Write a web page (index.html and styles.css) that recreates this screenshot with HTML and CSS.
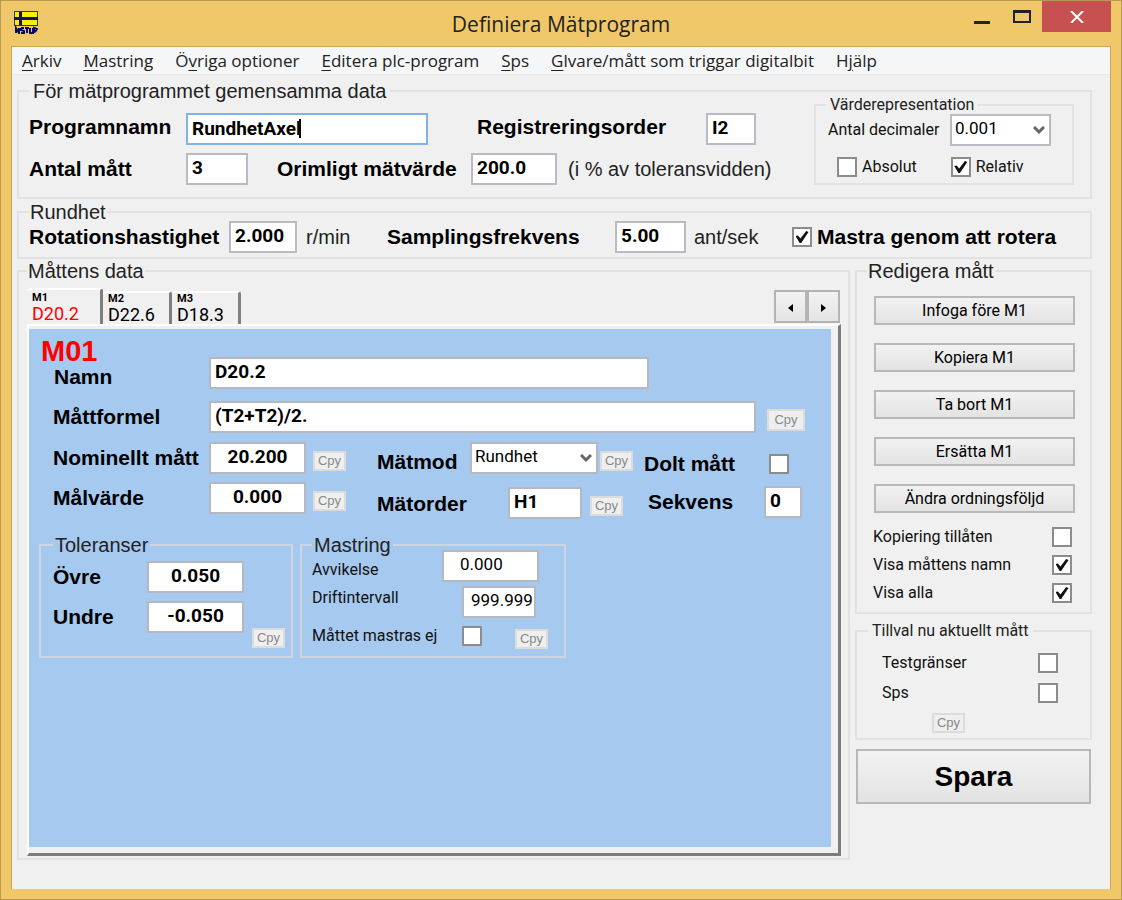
FILE: index.html
```html
<!DOCTYPE html>
<html lang="sv">
<head>
<meta charset="utf-8">
<title>Definiera Mätprogram</title>
<link rel="stylesheet" href="styles.css">
</head>
<body>
<div class="window">
  <header class="titlebar">
    <svg class="app-icon" viewBox="0 0 24 23" width="24" height="23" aria-hidden="true">
      <rect x="0" y="0" width="24" height="15" fill="#3a3a14"/>
      <rect x="1" y="1" width="22" height="13" fill="#f6f000"/>
      <rect x="0" y="6" width="24" height="3" fill="#10106e"/>
      <rect x="5" y="1" width="3" height="13" fill="#10106e"/>
      <path d="M2 22V17l3 5V17M7 17h3M7 17v2l3 1v2H7M11 17h4M13 17v5M16 17v5h3V17M20 22v-5l3 1-2 3" fill="none" stroke="#0a0a66" stroke-width="2"/>
    </svg>
    <h1 class="title">Definiera Mätprogram</h1>
    <div class="window-buttons">
      <button type="button" class="win-btn" aria-label="Minimera"><svg width="16" height="20" viewBox="0 0 16 20"><rect y="14" width="16" height="3" fill="#222"/></svg></button>
      <button type="button" class="win-btn" aria-label="Maximera"><svg width="18" height="20" viewBox="0 0 18 20"><path d="M1 4v11h16V4z" fill="none" stroke="#222" stroke-width="2"/><rect y="3" width="18" height="3" fill="#222"/></svg></button>
      <button type="button" class="win-btn win-close" aria-label="Stäng"><svg width="14" height="12" viewBox="0 0 14 12"><path d="M1 0l12 12M13 0L1 12" stroke="#fff" stroke-width="2"/></svg></button>
    </div>
  </header>

  <main class="client">
    <nav class="menu">
      <button type="button"><u>A</u>rkiv</button>
      <button type="button"><u>M</u>astring</button>
      <button type="button">Ö<u>v</u>riga optioner</button>
      <button type="button"><u>E</u>ditera plc-program</button>
      <button type="button"><u>S</u>ps</button>
      <button type="button"><u>G</u>lvare/mått som triggar digitalbit</button>
      <button type="button">H<u>j</u>älp</button>
    </nav>

    <form class="content">
      <fieldset class="group common">
        <legend class="wide-legend">För mätprogrammet gemensamma data</legend>
        <div class="common-fields">
          <div class="row top-row">
            <label class="label col-program" for="program">Programnamn</label>
            <span class="focus-field"><input class="box w-program focused" id="program" value="RundhetAxel"><i class="caret"></i></span>
            <label class="label col-register" for="register">Registreringsorder</label>
            <input class="box w-50" id="register" value="I2">
          </div>
          <div class="row">
            <label class="label col-program" for="count">Antal mått</label>
            <input class="box w-62" id="count" value="3">
            <label class="label col-unreal" for="unreal">Orimligt mätvärde</label>
            <input class="box w-86" id="unreal" value="200.0">
            <span class="unit">(i % av toleransvidden)</span>
          </div>
        </div>
        <fieldset class="group values">
          <legend class="small-legend">Värderepresentation</legend>
          <div class="row values-row">
            <label class="small" for="decimals">Antal decimaler</label>
            <span class="select-wrap w-100">
              <select class="box" id="decimals"><option>0.001</option></select>
              <svg class="chevron" width="12" height="9" viewBox="0 0 12 9"><path d="M1 1l5 5 5-5" fill="none" stroke="#666" stroke-width="3"/></svg>
            </span>
          </div>
          <div class="row checks">
            <label class="small check"><input type="checkbox">Absolut</label>
            <label class="small check"><input type="checkbox" checked>Relativ</label>
          </div>
        </fieldset>
      </fieldset>

      <fieldset class="group roundness">
        <legend>Rundhet</legend>
        <label class="label col-speed" for="speed">Rotationshastighet</label>
        <input class="box w-68" id="speed" value="2.000">
        <span class="unit col-rpm">r/min</span>
        <label class="label col-sampling" for="sampling">Samplingsfrekvens</label>
        <input class="box w-70" id="sampling" value="5.00">
        <span class="unit col-rate">ant/sek</span>
        <label class="label check"><input type="checkbox" checked>Mastra genom att rotera</label>
      </fieldset>

      <div class="columns">
        <fieldset class="group data">
          <legend>Måttens data</legend>
          <div class="tabbar">
            <div class="tabs" role="tablist">
              <button type="button" class="tab active" role="tab" aria-selected="true"><small>M1</small>D20.2</button>
              <button type="button" class="tab" role="tab"><small>M2</small>D22.6</button>
              <button type="button" class="tab" role="tab"><small>M3</small>D18.3</button>
            </div>
            <div class="pager">
              <button type="button" aria-label="Föregående"><svg width="5" height="8" viewBox="0 0 5 8"><path d="M5 0v8L0 4z"/></svg></button>
              <button type="button" aria-label="Nästa"><svg width="5" height="8" viewBox="0 0 5 8"><path d="M0 0v8l5-4z"/></svg></button>
            </div>
          </div>
          <div class="page">
            <div class="sheet">
              <div class="row name-row">
                <div class="heading col-name">
                  <h2>M01</h2>
                  <label class="label" for="name">Namn</label>
                </div>
                <input class="box w-name" id="name" value="D20.2">
              </div>
              <div class="row">
                <label class="label col-name" for="formula">Måttformel</label>
                <input class="box w-formula" id="formula" value="(T2+T2)/2.">
                <button type="button" class="cpy cpy-large" disabled>Cpy</button>
              </div>
              <div class="blocks">
                <div class="block-nominal">
                  <label class="label" for="nominal">Nominellt mått</label>
                  <input class="box centered" id="nominal" value="20.200">
                  <button type="button" class="cpy" disabled>Cpy</button>
                  <label class="label" for="target">Målvärde</label>
                  <input class="box centered" id="target" value="0.000">
                  <button type="button" class="cpy" disabled>Cpy</button>
                </div>
                <div class="block-mode">
                  <div class="row mode-row">
                    <label class="label" for="mode">Mätmod</label>
                    <span class="select-wrap w-128">
                      <select class="box" id="mode"><option>Rundhet</option></select>
                      <svg class="chevron" width="12" height="9" viewBox="0 0 12 9"><path d="M1 1l5 5 5-5" fill="none" stroke="#666" stroke-width="3"/></svg>
                    </span>
                    <button type="button" class="cpy" disabled>Cpy</button>
                  </div>
                  <div class="row order-row">
                    <label class="label" for="order">Mätorder</label>
                    <input class="box w-74" id="order" value="H1">
                    <button type="button" class="cpy" disabled>Cpy</button>
                  </div>
                </div>
                <div class="block-hidden">
                  <label class="label hidden-row">Dolt mått<input type="checkbox"></label>
                  <div class="row sequence-row">
                    <label class="label" for="sequence">Sekvens</label>
                    <input class="box w-38" id="sequence" value="0">
                  </div>
                </div>
              </div>
              <div class="subgroups">
                <fieldset class="group tolerances">
                  <legend>Toleranser</legend>
                  <div class="tolerance-grid">
                    <label class="label" for="upper">Övre</label>
                    <input class="box centered" id="upper" value="0.050">
                    <label class="label" for="lower">Undre</label>
                    <input class="box centered" id="lower" value="-0.050">
                  </div>
                  <button type="button" class="cpy" disabled>Cpy</button>
                </fieldset>
                <fieldset class="group mastering">
                  <legend>Mastring</legend>
                  <div class="row deviation-row">
                    <label class="small" for="deviation">Avvikelse</label>
                    <input class="box plain indented w-97" id="deviation" value="0.000">
                  </div>
                  <div class="row interval-row">
                    <label class="small" for="interval">Driftintervall</label>
                    <input class="box plain w-74" id="interval" value="999.999">
                  </div>
                  <div class="row nomaster-row">
                    <label class="small nomaster">Måttet mastras ej<input type="checkbox"></label>
                    <button type="button" class="cpy" disabled>Cpy</button>
                  </div>
                </fieldset>
              </div>
            </div>
          </div>
        </fieldset>

        <aside class="side">
          <fieldset class="group edit">
            <legend>Redigera mått</legend>
            <div class="edit-buttons">
              <button type="button" class="btn">Infoga före M1</button>
              <button type="button" class="btn">Kopiera M1</button>
              <button type="button" class="btn">Ta bort M1</button>
              <button type="button" class="btn">Ersätta M1</button>
              <button type="button" class="btn">Ändra ordningsföljd</button>
            </div>
            <div class="options">
              <label class="small">Kopiering tillåten<input type="checkbox"></label>
              <label class="small">Visa måttens namn<input type="checkbox" checked></label>
              <label class="small">Visa alla<input type="checkbox" checked></label>
            </div>
          </fieldset>
          <fieldset class="group extras">
            <legend class="small-legend">Tillval nu aktuellt mått</legend>
            <div class="extras-list">
              <label class="small">Testgränser<input type="checkbox"></label>
              <label class="small">Sps<input type="checkbox"></label>
              <button type="button" class="cpy" disabled>Cpy</button>
            </div>
          </fieldset>
          <button type="button" class="btn save">Spara</button>
        </aside>
      </div>
    </form>
  </main>
</div>
</body>
</html>
```
FILE: styles.css
```css
* { box-sizing: border-box; }

body {
  margin: 0;
  background: #f0c869;
  color: #000;
  font-family: "Liberation Sans", Arial, sans-serif;
}

button, input, select { font: inherit; color: inherit; margin: 0; }
button { padding: 0; }

.window {
  min-height: 100vh;
  display: flex;
  flex-direction: column;
  border: 1px solid #b8994e;
  padding: 0 10px 10px;
  background: #f0c869;
}

/* Title bar */
.titlebar {
  display: grid;
  grid-template-columns: 1fr auto 1fr;
  height: 45px;
}
.app-icon { margin: 10px 3px; }
.title {
  margin: 0;
  font: 400 21px/46px "Open Sans", "Noto Sans", sans-serif;
  color: #222;
}
.window-buttons { display: flex; justify-content: flex-end; }
.win-btn {
  width: 40px;
  height: 31px;
  border: 0;
  background: none;
  display: flex;
  align-items: center;
  justify-content: center;
}
.win-close { width: 69px; background: #c75050; }

.client {
  flex: 1;
  border: 1px solid #c9a652;
  border-bottom: 0;
  background: #f0f0f0;
}

/* Menu */
.menu {
  display: flex;
  gap: 22px;
  height: 28px;
  padding: 0 10px;
  background: #f5f6f7;
  border-bottom: 1px solid #e8e8e8;
}
.menu button {
  border: 0;
  background: none;
  white-space: nowrap;
  font: 400 17px/28px "Open Sans", "Noto Sans", sans-serif;
  color: #222;
}
.menu u { text-underline-offset: 3px; }

.content { padding: 15px 18px 28px 5px; }

/* Group boxes */
.group {
  margin: 0;
  min-width: 0;
  padding: 0;
  border: 2px solid #e2e2e2;
}
legend {
  padding: 0 1px;
  font-size: 20px;
  line-height: 2px;
  white-space: nowrap;
  color: #222;
}
.wide-legend { padding: 0 4px; }
.small-legend { font: 400 16px/2px Roboto, sans-serif; padding: 0 4px; }

.row { display: flex; align-items: center; }
.label { font-size: 21px; line-height: 24px; font-weight: 700; white-space: nowrap; }
.unit { font-size: 20px; line-height: 24px; white-space: nowrap; color: #222; }
.small { font: 400 16px/20px Roboto, sans-serif; white-space: nowrap; color: #111; }

.box {
  height: 32px;
  padding: 0 4px 4px;
  border: 2px solid #b9bac4;
  border-radius: 0;
  background: #fff;
  font: 700 19px/24px Roboto, sans-serif;
  outline: 0;
  min-width: 0;
}
.plain { font-size: 17px; font-weight: 400; padding: 0 0 4px 7px; }
.indented { padding-left: 16px; }
.centered { text-align: center; }
.focused { border-color: #7eb4ea; padding-bottom: 1px; }
.focus-field { position: relative; display: flex; }
.caret { position: absolute; left: 113px; top: 6px; width: 2px; height: 19px; background: #000; }

.w-program { width: 242px; }
.w-38 { width: 38px; }
.w-50 { width: 50px; }
.w-62 { width: 62px; }
.w-68 { width: 68px; }
.w-70 { width: 71px; }
.w-74 { width: 74px; }
.w-86 { width: 86px; }
.w-97 { width: 97px; }
.w-100 { width: 101px; }
.w-128 { width: 128px; }
.w-name { width: 440px; }
.w-formula { width: 547px; }

.select-wrap { position: relative; display: flex; }
select.box { appearance: none; width: 100%; font-weight: 400; font-size: 17px; padding-left: 3px; }
.chevron { position: absolute; right: 6px; top: 12px; pointer-events: none; }

input[type="checkbox"] {
  appearance: none;
  flex: none;
  width: 20px;
  height: 20px;
  border: 2px solid #8c8c8c;
  background: #fff;
  display: grid;
  place-items: center;
}
input[type="checkbox"]:checked::before {
  content: "";
  width: 13px;
  height: 12px;
  background: #111;
  clip-path: polygon(0 42%, 18% 38%, 38% 62%, 82% 0, 100% 8%, 44% 100%, 32% 100%);
}
.check { display: flex; align-items: center; gap: 5px; }

/* Common data */
.common { display: flex; justify-content: space-between; padding: 0 16px 12px 10px; }
.common-fields { display: grid; align-content: start; gap: 8px; padding-top: 21px; }
.top-row .label { padding-bottom: 4px; }
.col-program { width: 157px; }
.col-register { width: 278px; padding-left: 49px; }
.col-unreal { width: 223px; padding-left: 29px; }
.common-fields .unit { padding-left: 11px; }
.values { width: 260px; margin-top: 12px; padding-left: 10px; }
.values-row { justify-content: space-between; padding: 8px 21px 0 2px; }
.checks { gap: 34px; padding: 11px 0 0 11px; }

/* Roundness */
.roundness {
  display: flex;
  align-items: center;
  margin-top: 12px;
  padding: 8px 10px 4px;
}
.col-speed { width: 200px; }
.col-rpm { width: 90px; padding-left: 9px; }
.col-sampling { width: 228px; }
.col-rate { width: 106px; padding-left: 8px; }

/* Main columns */
.columns {
  display: grid;
  grid-template-columns: 1fr 237px;
  gap: 5px;
  margin-top: 11px;
  align-items: start;
}
.data { padding: 16px 7px 2px 8px; }
.tabbar { display: flex; justify-content: space-between; align-items: flex-end; }
.tabs { display: flex; align-items: flex-end; }
.tab {
  width: 69px;
  height: 33px;
  padding: 0 5px;
  border: 0;
  border-top: 2px solid #fff;
  border-right: 3px solid #808080;
  border-radius: 4px 3px 0 0;
  background: #f0f0f0;
  text-align: left;
  font: 400 18px/19px Roboto, sans-serif;
}
.tab.active { width: 76px; height: 36px; color: #f00; }
.tab small { display: block; font: 700 11px/12px Roboto, sans-serif; color: #000; }
.pager { display: flex; padding: 0 1px 1px 0; }
.pager button {
  width: 33px;
  height: 33px;
  border: 2px solid #b4b4b4;
  background: linear-gradient(#f2f2f2, #e4e4e4);
}
.page {
  border: 2px solid #fff;
  border-right: 3px solid #7c7c7c;
  border-bottom: 3px solid #7c7c7c;
  padding: 3px 7px 6px 0;
}
.sheet { min-height: 518px; padding: 8px 10px; background: #a6c9ef; }
.sheet .group { border-color: #cdd6e0; }
.heading { display: grid; padding-left: 2px; }
.heading h2 { margin: 0; font-size: 29px; line-height: 28px; color: #f00; }
.heading .label { padding-left: 13px; }
.sheet .box { border-color: #b4b8c0; }
.col-name { width: 170px; flex: none; }
label.col-name { padding-left: 14px; }
.name-row { align-items: flex-end; padding-bottom: 12px; }

.cpy {
  width: 33px;
  height: 20px;
  border: 2px solid #dcdcdc;
  background: #efefef;
  color: #888;
  font: 400 13px/14px "Liberation Sans", sans-serif;
}
.row .cpy, .block-nominal .cpy { margin-top: 6px; }
.cpy-large { width: 38px; height: 22px; margin-left: 11px; }

.blocks { display: flex; align-items: flex-start; padding-top: 9px; }
.block-nominal {
  display: grid;
  grid-template-columns: 156px 97px 40px;
  row-gap: 8px;
  align-items: center;
  padding-left: 14px;
}
.block-nominal .cpy { margin-left: 7px; }
.block-mode { width: 257px; margin-left: 31px; }
.mode-row { gap: 2px; }
.mode-row .label { width: 91px; padding-top: 8px; }
.order-row { gap: 8px; padding-top: 13px; }
.order-row .label { width: 123px; padding-top: 2px; }
.block-hidden { width: 158px; margin-left: 10px; padding-top: 10px; }
.hidden-row { display: flex; justify-content: space-between; align-items: center; padding-right: 13px; }
.sequence-row { justify-content: space-between; padding: 10px 0 0 4px; }

.subgroups { display: flex; gap: 7px; padding-top: 25px; }
.tolerances { width: 254px; height: 114px; padding: 15px 6px 8px 12px; display: flex; justify-content: space-between; align-items: flex-end; }
.tolerance-grid { display: grid; grid-template-columns: 94px 97px; gap: 8px 0; align-self: flex-start; align-items: center; }
.mastering { width: 266px; height: 114px; padding: 4px 0 0 10px; }
.sheet legend { padding: 0 2px; }
.deviation-row .small { width: 130px; padding-top: 8px; }
.interval-row { padding-top: 4px; }
.interval-row .small { width: 150px; padding-bottom: 8px; }
.nomaster-row { padding-top: 5px; gap: 33px; }
.nomaster { display: flex; justify-content: space-between; align-items: center; width: 170px; }

/* Side column */
.side { display: grid; gap: 9px; }
.edit { padding: 24px 10px 9px; }
.edit-buttons { display: grid; gap: 18px; padding: 0 5px 0 7px; }
.btn {
  height: 29px;
  border: 2px solid #b8b8b8;
  background: linear-gradient(#f2f2f2, #e3e3e3);
  font: 400 16px/20px Roboto, sans-serif;
}
.options { display: grid; gap: 8px; padding: 14px 8px 0 6px; }
.options .small, .extras .small { display: flex; justify-content: space-between; align-items: center; }
.extras { margin-top: 7px; padding: 21px 12px 5px 11px; }
.extras-list { display: grid; gap: 10px; padding: 0 20px 0 14px; }
.extras .cpy { margin-left: 50px; }
.save { height: 55px; margin: 0 1px; font: 700 28px/32px "Liberation Sans", sans-serif; }
```
